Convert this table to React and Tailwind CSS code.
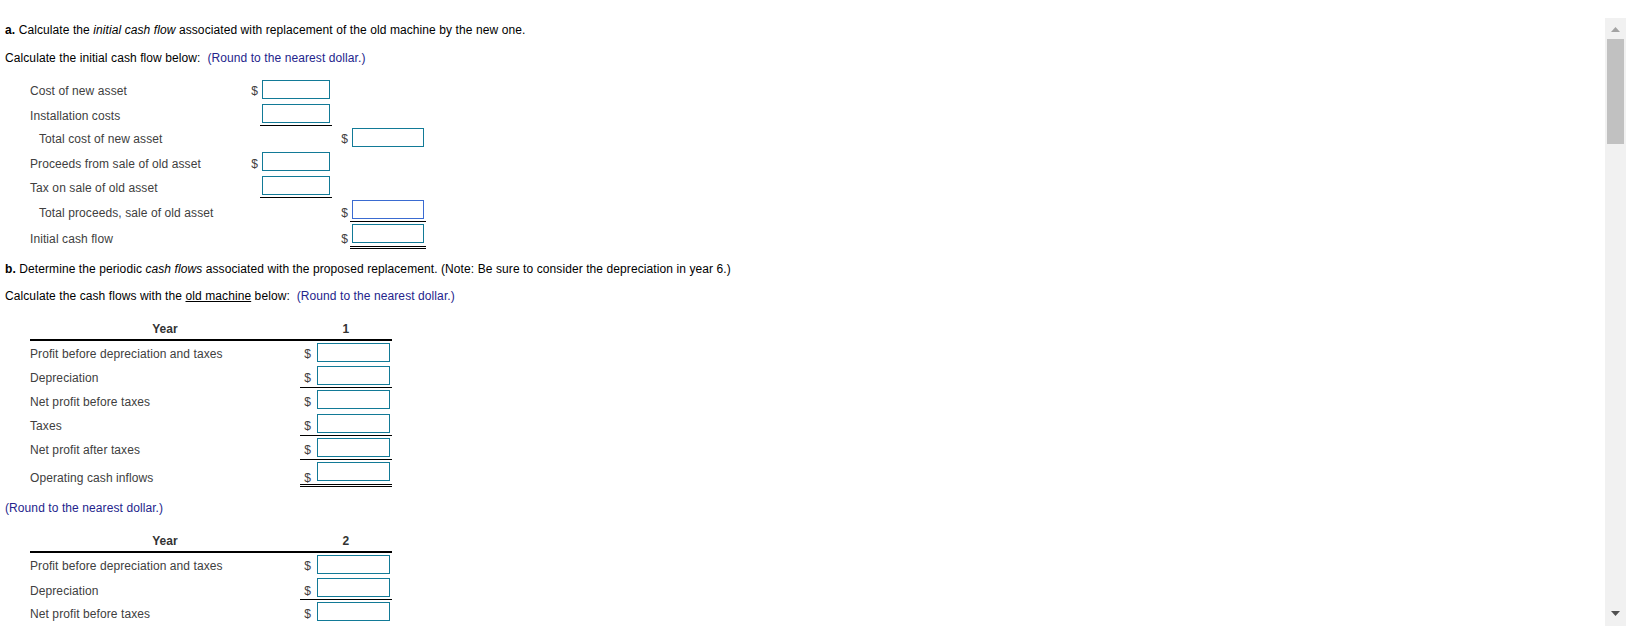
const boxCls = "block h-[19px] border border-[#127a97] bg-white";

// part a: initial cash flow rows
const partA = [
    { label: "Cost of new asset", pt: "pt-[6px]", c1: { dollar: true } },
    { label: "Installation costs", c1: { line: true } },
    { label: "Total cost of new asset", indent: true, pt: "pt-[6px]", c2: { dollar: true } },
    { label: "Proceeds from sale of old asset", c1: { dollar: true } },
    { label: "Tax on sale of old asset", c1: { line: true } },
    { label: "Total proceeds, sale of old asset", indent: true, pt: "pt-[8px]", c2: { dollar: true, line: true, focus: true } },
    { label: "Initial cash flow", pt: "pt-[10px]", tall: true, c2: { dollar: true, double: true } },
];

const rowsB = [
    { label: "Profit before depreciation and taxes", h: "h-[23px]", pt: "pt-[6px]" },
    { label: "Depreciation", line: true },
    { label: "Net profit before taxes" },
    { label: "Taxes", line: true },
    { label: "Net profit after taxes", line: true },
    { label: "Operating cash inflows", h: "h-[27px]", pt: "pt-[11px]", double: true },
];

const rowsB2 = [
    { label: "Profit before depreciation and taxes", h: "h-[23px]", pt: "pt-[6px]" },
    { label: "Depreciation", line: true, pt: "pt-[8px]" },
    { label: "Net profit before taxes" },
    { label: "Taxes", line: true },
    { label: "Net profit after taxes", line: true },
    { label: "Operating cash inflows", h: "h-[27px]", pt: "pt-[11px]", double: true },
];

const Round = () => <span className="text-[#24248c]">(Round to the nearest dollar.)</span>;

const InitialTable = () => (
    <div className="ml-[25px] text-[#404040]">
        {partA.map((r) => {
            const edge = r.c2?.double ? "border-b-[3px] border-double border-black" : "";
            return (
                <div key={r.label} className={`flex ${r.tall ? "h-[27px]" : "h-[24px]"}`}>
                    <div className={`w-[220px] ${r.pt || "pt-[7px]"} ${r.indent ? "pl-[9px]" : ""}`}>{r.label}</div>
                    <div className={`w-[10px] pr-[2px] text-right ${r.pt || "pt-[7px]"}`}>{r.c1?.dollar ? "$" : ""}</div>
                    <div className={`w-[72px] px-[2px] h-[24px] ${r.c1?.line ? "border-b border-black" : ""}`}>
                        {r.c1 && <input readOnly className={`${boxCls} w-[68px] mt-[2px]`} />}
                    </div>
                    <div className={`w-[18px] pr-[2px] text-right ${r.pt || "pt-[7px]"}`}>{r.c2?.dollar ? "$" : ""}</div>
                    <div className={`w-[76px] px-[2px] ${r.tall ? "h-[27px]" : "h-[24px]"} ${r.c2?.line ? "border-b border-black" : ""} ${edge}`}>
                        {r.c2 && (
                            <input
                                readOnly
                                className={`block h-[19px] w-[72px] mt-[2px] border bg-white ${r.c2.focus ? "border-[#3a6bd1]" : "border-[#127a97]"}`}
                            />
                        )}
                    </div>
                </div>
            );
        })}
    </div>
);

const YearTable = ({ year, rows, className }) => (
    <div className={`ml-[25px] text-[#404040] ${className}`}>
        <div className="flex w-[362px] h-[25px] border-b-2 border-black font-bold text-[#333]">
            <div className="w-[270px] pt-[6px] text-center">Year</div>
            <div className="w-[92px] pt-[6px] text-center">{year}</div>
        </div>
        {rows.map((r) => (
            <div key={r.label} className={`flex ${r.h || "h-[24px]"}`}>
                <div className={`w-[270px] ${r.pt || "pt-[7px]"}`}>{r.label}</div>
                <div
                    className={`flex w-[92px] ${
                        r.double ? "border-b-[3px] border-double border-black" : r.line ? "border-b border-black" : ""
                    }`}
                >
                    <div className={`w-[15px] pr-[4px] text-right ${r.pt || "pt-[7px]"}`}>$</div>
                    <div className="w-[77px] px-[2px]">
                        <input readOnly className={`${boxCls} w-[73px] mt-[2px]`} />
                    </div>
                </div>
            </div>
        ))}
    </div>
);

const Scrollbar = () => (
    <div className="w-[21px] h-full bg-[#f1f1f1] flex flex-col items-center">
        <div className="h-[21px] w-full flex items-center justify-center pt-[1px]">
            <svg width="9" height="5" viewBox="0 0 9 5">
                <polygon points="4.5,0 9,5 0,5" fill="#a3a3a3" />
            </svg>
        </div>
        <div className="w-[17px] h-[105px] bg-[#c1c1c1]" />
        <div className="flex-1" />
        <div className="h-[21px] w-full flex items-start justify-center pt-[6px]">
            <svg width="9" height="5" viewBox="0 0 9 5">
                <polygon points="0,0 9,0 4.5,5" fill="#505050" />
            </svg>
        </div>
    </div>
);

export default function App() {
    return (
        <div className="w-[1628px] h-[637px] bg-white pt-[18px] overflow-hidden font-['Liberation_Sans',Arial,sans-serif] text-[12px] leading-[14px] tracking-[0.09px] text-black">
            <div className="flex h-[608px] w-[1626px]">
                <div className="flex-1 overflow-hidden pl-[5px] pt-[5px]">
                    <p className="mb-[14px]">
                        <b>a.</b> Calculate the <i>initial cash flow</i> associated with replacement of the old machine by the new one.
                    </p>
                    <p className="mb-[13px]">
                        Calculate the initial cash flow below:&nbsp; <Round />
                    </p>

                    <InitialTable />

                    <p className="mt-[13px] mb-[13px]">
                        <b>b.</b> Determine the periodic <i>cash flows</i> associated with the proposed replacement. (Note: Be sure to consider the depreciation in year 6.)
                    </p>
                    <p>
                        Calculate the cash flows with the <u>old machine</u> below:&nbsp; <Round />
                    </p>

                    <YearTable year="1" rows={rowsB} className="mt-[13px]" />

                    <p className="mt-[14px]">
                        <Round />
                    </p>

                    <YearTable year="2" rows={rowsB2} className="mt-[13px]" />
                </div>
                <Scrollbar />
            </div>
        </div>
    );
}
